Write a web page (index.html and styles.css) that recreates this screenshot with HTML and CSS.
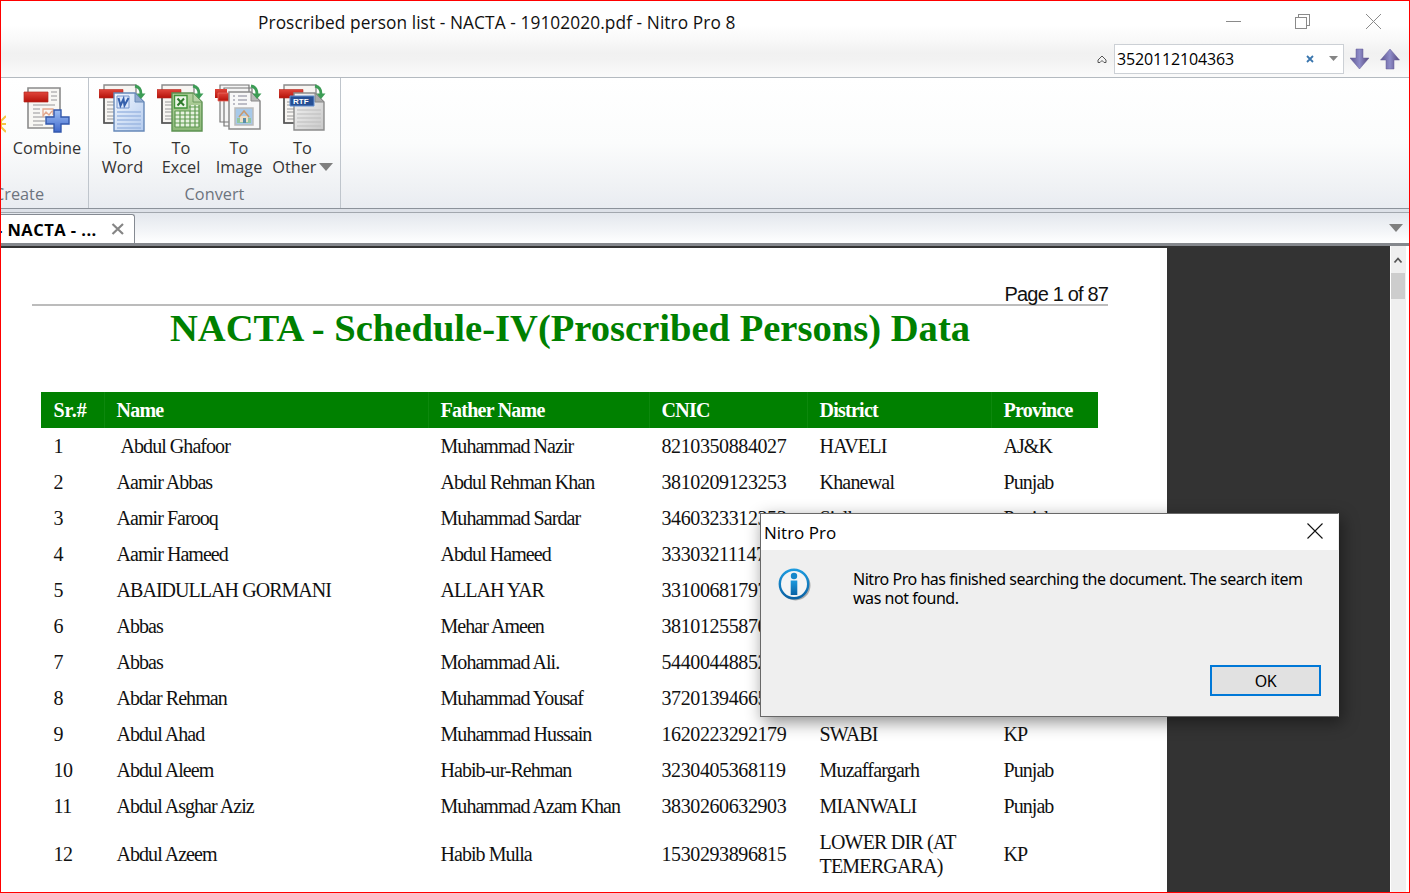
FILE: index.html
```html
<!DOCTYPE html>
<html lang="en">
<head>
<meta charset="utf-8">
<title>Nitro Pro 8</title>
<link rel="stylesheet" href="styles.css">
</head>
<body>
<svg width="0" height="0" class="defs">
  <defs>
    <linearGradient id="red" x1="0" y1="0" x2="0" y2="1"><stop offset="0" stop-color="#e0453a"/><stop offset="1" stop-color="#b5120a"/></linearGradient>
    <linearGradient id="blue" x1="0" y1="0" x2="1" y2="1"><stop offset="0" stop-color="#f4f9ff"/><stop offset="1" stop-color="#b4cbee"/></linearGradient>
    <linearGradient id="green" x1="0" y1="0" x2="0" y2="1"><stop offset="0" stop-color="#b4d19f"/><stop offset="1" stop-color="#8cb878"/></linearGradient>
    <linearGradient id="gray" x1="0" y1="0" x2="1" y2="1"><stop offset="0" stop-color="#f6f6f6"/><stop offset="1" stop-color="#c8c8c8"/></linearGradient>
    <linearGradient id="plus" x1="0" y1="0" x2="0" y2="1"><stop offset="0" stop-color="#9fc0f5"/><stop offset="1" stop-color="#3f68cc"/></linearGradient>
    <linearGradient id="arrow" x1="0" y1="0" x2="1" y2="0"><stop offset="0" stop-color="#5d5590"/><stop offset=".5" stop-color="#8e8cc8"/><stop offset="1" stop-color="#54457c"/></linearGradient>
    <linearGradient id="info" x1="0" y1="0" x2="0" y2="1"><stop offset="0" stop-color="#1c9ade"/><stop offset="1" stop-color="#0a62a4"/></linearGradient>
    <g id="pdf-back">
      <path d="M5 1H37V39H5Z" fill="#f7f5f2" stroke="#8b8b8b" stroke-width="1.4"/>
      <path d="M5 14V39H16" fill="none" stroke="#555" stroke-width="1.6"/>
      <path d="M8 18H15M8 21H15M8 25H15M8 28H15M8 32H15M8 35H15" stroke="#999" stroke-width="1.1"/>
      <path d="M0 5.500H24V14H0Z" fill="url(#red)" stroke="#b52a20" stroke-width=".6"/>
    </g>
    <g id="turn"><path d="M36 2Q42 3 42 10" fill="none" stroke="#3c9c55" stroke-width="2.800"/><path d="M37.500 9.500H46.500L42 15Z" fill="#3c9c55"/></g>
  </defs>
</svg>
<div class="window">
  <header class="caption">
    <div class="title-row">
      <span class="window-title">Proscribed person list - NACTA - 19102020.pdf - Nitro Pro 8</span>
      <div class="window-buttons">
        <svg width="156" height="18" viewBox="0 0 156 18" fill="none" stroke="#8a8a8a" shape-rendering="crispEdges"><path d="M0 7.500H15M69.500 3.500H80.500V14.500H69.500ZM72.500 3V.5H83.500V11.500H81"/><path d="M140 0L155 15M155 0L140 15" shape-rendering="auto"/></svg>
      </div>
    </div>
    <div class="find-row">
      <svg width="10" height="9" viewBox="0 0 10 9" fill="none" stroke="#555"><path d="M1 5L5 1L9 5M1 5V7.500H3L5 5.500L7 7.500H9V5"/></svg>
      <div class="find-box">
        <span class="find-text">3520112104363</span>
        <svg width="37" height="12" viewBox="0 0 37 12"><path d="M1 3L7 9M7 3L1 9" stroke="#3a76ae" stroke-width="1.800"/><path d="M23 3H32L27.500 8Z" fill="#858585"/></svg>
      </div>
      <svg width="50" height="22" viewBox="0 0 50 22" fill="url(#arrow)" stroke="#655f98" stroke-width=".5"><path d="M6 1H13V10H19L9.500 21L0 10H6Z"/><path d="M36 21H44V12H49.500L40 1L30.500 12H36Z"/></svg>
    </div>
  </header>

  <section class="ribbon">
    <div class="group create">
      <div class="tools">
        <div class="partial"><svg width="5" height="20" viewBox="0 0 5 20" stroke="#f5c443" stroke-width="2"><path d="M0 10H5M0 7L5 2M0 13L5 18M0 6V14"/></svg></div>
        <div class="tool combine">
          <svg width="48" height="50" viewBox="0 0 48 50">
            <path d="M5 4H37V44H5Z" fill="#f8f7f4" stroke="#8b8b8b" stroke-width="1.600"/>
            <path d="M28 8H34M28 12H34M28 16H34M10 25H17M10 29H17M10 33H30M10 37H22M10 41H20M10 21H32" stroke="#b7b7b7" stroke-width="1.500"/>
            <path d="M20 33V25H30V31M20 32L23 28L26 31L29 27" fill="none" stroke="#e2a88e" stroke-width="1.300"/>
            <path d="M1 8H25V18H1Z" fill="url(#red)" stroke="#b52a20" stroke-width=".7"/>
            <path d="M31 26H38V33H46V40H38V48H31V40H23V33H31Z" fill="url(#plus)" stroke="#3358ac" stroke-width="1.400"/>
          </svg>
          <span>Combine</span>
        </div>
      </div>
      <div class="group-name">Create</div>
    </div>
    <div class="group convert">
      <div class="tools">
        <div class="tool word">
          <svg width="48" height="50" viewBox="0 0 48 50"><use href="#pdf-back"/>
            <path d="M15 9H36L45 18V47H15Z" fill="url(#blue)" stroke="#6688b8" stroke-width="1.400"/><path d="M36 9V18H45Z" fill="#93abd0" stroke="#6688b8"/>
            <path d="M18 28H42M18 32H42M18 36H42M18 40H42M18 44H42" stroke="#9db8e2" stroke-width="1.400"/>
            <path d="M18 12H30V24H18Z" fill="#dce8fb" stroke="#7494cc"/><path d="M19.500 14L21.500 21.500L24.500 15L25.500 21.500L29.500 14" fill="none" stroke="#3560ac" stroke-width="2"/><use href="#turn"/></svg>
          <span>To<br>Word</span>
        </div>
        <div class="tool excel">
          <svg width="48" height="50" viewBox="0 0 48 50"><use href="#pdf-back"/>
            <path d="M15 9H36L45 18V47H15Z" fill="url(#green)" stroke="#5b9150" stroke-width="1.400"/><path d="M36 9V18H45Z" fill="#b9d3a8" stroke="#6c9b5e"/>
            <path d="M18 27H42V43H18ZM32 21H42V27H32Z" fill="#e7f2df"/><path d="M18 27H42M18 31H42M18 35H42M18 39H42M18 43H42M32 23H42M18 27V43M23 27V43M28 27V43M33 21V43M38 21V43M42 21V43" stroke="#5e9950" stroke-width="1.200"/>
            <path d="M17.500 11.500H30V24H17.500Z" fill="#edf6e8" stroke="#42943a" stroke-width="1.400"/><path d="M20.500 14.500L27 21.500M27 14.500L20.500 21.500" stroke="#2f7a2c" stroke-width="2"/><use href="#turn"/></svg>
          <span>To<br>Excel</span>
        </div>
        <div class="tool image">
          <svg width="48" height="50" viewBox="0 0 48 50">
            <path d="M5 1H34V38H5ZM9 4H37V42H9Z" fill="#f5f5f5" stroke="#777" stroke-width="1.200"/>
            <path d="M0 5H12V14H0Z" fill="url(#red)"/><path d="M3 9H14V17H3Z" fill="url(#red)" stroke="#e86a60" stroke-width=".8"/>
            <path d="M14 8H36L45 17V45H14Z" fill="#f8f8f8" stroke="#8a8a8a" stroke-width="1.500"/><path d="M36 8V17H45Z" fill="#b8b8b8" stroke="#888"/>
            <path d="M18 12H20M23 12H32M18 16H20M23 16H32M18 20H20M23 20H32" stroke="#a9a9b5" stroke-width="1.300"/>
            <path d="M20 24H38V41H20Z" fill="#a7c9e9" stroke="#bbb" stroke-width="1.500"/><path d="M22 34H36V39H22Z" fill="#93c6a0"/><path d="M25 32H33V38H25Z" fill="#eedfc5"/><path d="M24 33L29 27L34 33" fill="none" stroke="#c89a70" stroke-width="1.600"/><path d="M28 34H31V39H28Z" fill="#5a8ca8"/><use href="#turn"/></svg>
          <span>To<br>Image</span>
        </div>
        <div class="tool other">
          <svg width="48" height="50" viewBox="0 0 48 50"><use href="#pdf-back"/>
            <path d="M15 9H36L45 18V46H15Z" fill="url(#gray)" stroke="#8c8c8c" stroke-width="1.400"/><path d="M36 9V18H45Z" fill="#aaa" stroke="#888"/>
            <path d="M18 26H42M18 30H42M18 34H42M18 38H42M18 42H42" stroke="#bdbdbd" stroke-width="1.200"/>
            <path d="M11 12H35V22H11Z" fill="#264f94" stroke="#6290d0"/><text x="14" y="20" class="rtf">RTF</text><use href="#turn"/></svg>
          <span>To<br>Other <i class="caret"></i></span>
        </div>
      </div>
      <div class="group-name">Convert</div>
    </div>
  </section>

  <nav class="tabbar">
    <div class="tab"><b>- NACTA - ...</b><svg width="14" height="14" viewBox="0 0 14 14"><path d="M1.500 2L12 12M12 2L1.500 12" stroke="#858585" stroke-width="2.200"/></svg></div>
    <i class="caret"></i>
  </nav>

  <main class="viewer">
    <article class="page">
      <div class="page-number"><span>Page 1 of 87</span></div>
      <h1>NACTA - Schedule-IV(Proscribed Persons) Data</h1>
      <table>
        <colgroup><col class="c-sr"><col class="c-name"><col class="c-father"><col class="c-cnic"><col class="c-district"><col class="c-province"></colgroup>
        <thead><tr><th>Sr.#</th><th>Name</th><th>Father Name</th><th>CNIC</th><th>District</th><th>Province</th></tr></thead>
        <tbody>
          <tr><td>1</td><td>&nbsp;Abdul Ghafoor</td><td>Muhammad Nazir</td><td>8210350884027</td><td>HAVELI</td><td>AJ&amp;K</td></tr>
          <tr><td>2</td><td>Aamir Abbas</td><td>Abdul Rehman Khan</td><td>3810209123253</td><td>Khanewal</td><td>Punjab</td></tr>
          <tr><td>3</td><td>Aamir Farooq</td><td>Muhammad Sardar</td><td>3460323312353</td><td>Sialkot</td><td>Punjab</td></tr>
          <tr><td>4</td><td>Aamir Hameed</td><td>Abdul Hameed</td><td>33303211147</td><td></td><td></td></tr>
          <tr><td>5</td><td>ABAIDULLAH GORMANI</td><td>ALLAH YAR</td><td>33100681797</td><td></td><td></td></tr>
          <tr><td>6</td><td>Abbas</td><td>Mehar Ameen</td><td>38101255870</td><td></td><td></td></tr>
          <tr><td>7</td><td>Abbas</td><td>Mohammad Ali.</td><td>54400448852</td><td></td><td></td></tr>
          <tr><td>8</td><td>Abdar Rehman</td><td>Muhammad Yousaf</td><td>37201394665</td><td></td><td></td></tr>
          <tr><td>9</td><td>Abdul Ahad</td><td>Muhammad Hussain</td><td>1620223292179</td><td>SWABI</td><td>KP</td></tr>
          <tr><td>10</td><td>Abdul Aleem</td><td>Habib-ur-Rehman</td><td>3230405368119</td><td>Muzaffargarh</td><td>Punjab</td></tr>
          <tr><td>11</td><td>Abdul Asghar Aziz</td><td>Muhammad Azam Khan</td><td>3830260632903</td><td>MIANWALI</td><td>Punjab</td></tr>
          <tr><td>12</td><td>Abdul Azeem</td><td>Habib Mulla</td><td>1530293896815</td><td>LOWER DIR (AT<br>TEMERGARA)</td><td>KP</td></tr>
        </tbody>
      </table>
    </article>
    <div class="scrollbar">
      <svg width="15" height="27" viewBox="0 0 15 27"><path d="M3.500 16.500L7 12.500L10.500 16.500" fill="none" stroke="#555" stroke-width="1.800"/></svg>
      <div class="thumb"></div>
    </div>
  </main>

  <div class="dialog" role="dialog">
    <div class="dialog-title"><span>Nitro Pro</span><svg width="16" height="18" viewBox="0 0 16 18"><path d="M.5 .5L15.500 15.500M15.500 .5L.5 15.500" stroke="#111" stroke-width="1.100"/></svg></div>
    <div class="dialog-body">
      <svg width="34" height="34" viewBox="0 0 34 34"><circle cx="17.500" cy="17.500" r="15" fill="#aaa"/><circle cx="16" cy="16" r="14.200" fill="#f3f4f5" stroke="url(#info)" stroke-width="2.400"/><circle cx="16" cy="8" r="3.200" fill="#1587cb"/><path d="M12.700 12.500H19.300V27H12.700Z" fill="url(#info)"/></svg>
      <p>Nitro Pro has finished searching the document. The search item<br><span>was not found.</span></p>
    </div>
    <div class="dialog-actions"><button><span>OK</span></button></div>
  </div>
</div>
</body>
</html>
```
FILE: styles.css
```css
* { box-sizing: border-box; }
body { margin: 0; background: #fff; overflow: hidden; font-family: "Open Sans", "Noto Sans", sans-serif; color: #111; }
.defs { position: absolute; }
.window { position: relative; width: 1410px; height: 893px; border: 1px solid #f00; display: flex; flex-direction: column; overflow: hidden; }
svg { display: block; flex: none; }

.caption { flex: none; height: 77px; background: linear-gradient(#fff 24px, #f9f9f9 38px, #f1f1f1 52px, #f2f2f2 58px, #fafafa 75px); border-bottom: 1px solid #b4bac0; }
.title-row { height: 42px; display: flex; justify-content: space-between; padding: 9px 27px 0 257px; }
.window-title { font: 17.3px/25px "Open Sans", sans-serif; letter-spacing: .085px; white-space: nowrap; }
.window-buttons { padding-top: 4px; }
.find-row { display: flex; align-items: center; justify-content: flex-end; padding-right: 9px; height: 32px; }
.find-box { width: 230px; height: 30px; margin: 0 6px 0 7px; background: #fff; border: 1px solid #ccd0d5; display: flex; align-items: center; justify-content: space-between; padding: 0 0 0 2px; }
.find-text { font-size: 16px; letter-spacing: -.15px; color: #000; }

.ribbon { flex: none; height: 131px; display: flex; background: linear-gradient(#fff, #fbfcfc 65px, #eff1f4 110px, #e9ecf1); border-bottom: 1px solid #8c929a; }
.group { padding-top: 6px; display: flex; flex-direction: column; border-right: 1px solid #bfc5cc; }
.create { width: 88px; }
.convert { width: 252px; }
.tools { display: flex; height: 99px; }
.tool { display: flex; flex-direction: column; align-items: center; }
.tool > svg { margin-bottom: 5px; }
.tool span { font-size: 16.3px; line-height: 19px; text-align: center; color: #333; white-space: nowrap; }
.partial { width: 5px; padding-top: 30px; }
.combine { width: 85px; }
.word { width: 67px; }
.excel { width: 50px; }
.image { width: 66px; }
.other { width: 61px; }
.other .caret { margin-left: -2px; vertical-align: 2px; }
.group-name { font-size: 16.3px; line-height: 22px; color: #6d747e; text-align: center; }
.create .group-name { margin-left: -7px; text-align: left; }
.rtf { font: bold 8px "Liberation Sans", sans-serif; fill: #fff; }
.caret { display: inline-block; border: 7px solid transparent; border-top: 8px solid #7f7f7f; border-bottom: 0; }

.tabbar { flex: none; height: 37px; border-top: 3px solid #dde1e8; border-bottom: 3px solid #85888d; background: linear-gradient(#a2a7ae 1px, #e3e7ed 1px, #f2f4f7 18px, #fff); display: flex; justify-content: space-between; align-items: center; padding-right: 6px; }
.tab { width: 134px; height: 29px; align-self: flex-end; background: #fff; border: 1px solid #858a92; border-left: 0; border-bottom: 0; border-top-right-radius: 3px; display: flex; align-items: center; justify-content: space-between; padding: 0 9px 0 0; white-space: nowrap; }
.tab b { font-size: 16.5px; letter-spacing: .45px; color: #000; margin-left: -4px; }

.viewer { flex: 1; min-height: 0; display: flex; justify-content: space-between; background: #333; }
.page { width: 1166px; margin-top: 2px; background: #fff; overflow: hidden; padding-left: 31px; font-family: "Liberation Serif", serif; color: #111; }
.page-number { width: 1076px; height: 58px; border-bottom: 2px solid #bcbcbc; display: flex; justify-content: flex-end; align-items: flex-end; }
.page-number span { font: 20px/20px "Liberation Sans", sans-serif; letter-spacing: -.83px; }
h1 { width: 1076px; margin: 0; text-align: center; color: #008000; font-size: 38.6px; line-height: 44px; white-space: nowrap; }
table { width: 1057px; margin: 42px 0 0 9px; table-layout: fixed; border-collapse: collapse; font-size: 20px; line-height: 24px; letter-spacing: -.95px; }
.c-sr { width: 63px; } .c-name { width: 324px; } .c-father { width: 221px; } .c-cnic { width: 158px; } .c-district { width: 184px; } .c-province { width: 107px; }
th, td { height: 36px; padding: 6px 0 6px 12.500px; text-align: left; white-space: nowrap; }
th { background: #008000; color: #fff; letter-spacing: -.75px; }
th:first-child { letter-spacing: 0; }
th + th { box-shadow: inset 1px 0 #0d880d; }
tbody td:nth-child(1), tbody td:nth-child(4) { letter-spacing: -.4px; }
tbody td:nth-child(5) { letter-spacing: -.8px; }

.scrollbar { width: 19px; background: #efefef; border-left: 1px solid #fff; border-right: 3px solid #fff; }
.thumb { width: 14px; height: 26px; background: #cdcdcd; }

.dialog { position: absolute; left: 759px; top: 512px; width: 579px; height: 204px; background: #efefef; border: 1px solid #686868; border-right-color: #efefef; box-shadow: 3px 5px 16px rgba(0,0,0,.45); display: flex; flex-direction: column; }
.dialog-title { height: 36px; background: #fff; display: flex; align-items: center; justify-content: space-between; padding: 0 15px 0 3px; font-size: 17px; color: #000; }
.dialog-body { flex: 1; display: flex; gap: 41px; padding: 18px 0 0 17px; }
.dialog-body p { margin: 2px 0 0; font: 16px/19px "Noto Sans", sans-serif; letter-spacing: -.46px; color: #000; white-space: nowrap; }
.dialog-actions { display: flex; justify-content: flex-end; padding: 0 17px 20px; }
button { width: 111px; height: 31px; padding: 0; border: 2px solid #0078d7; background: #e1e1e1; font: 16px "Noto Sans", sans-serif; letter-spacing: -.4px; color: #000; }
```
